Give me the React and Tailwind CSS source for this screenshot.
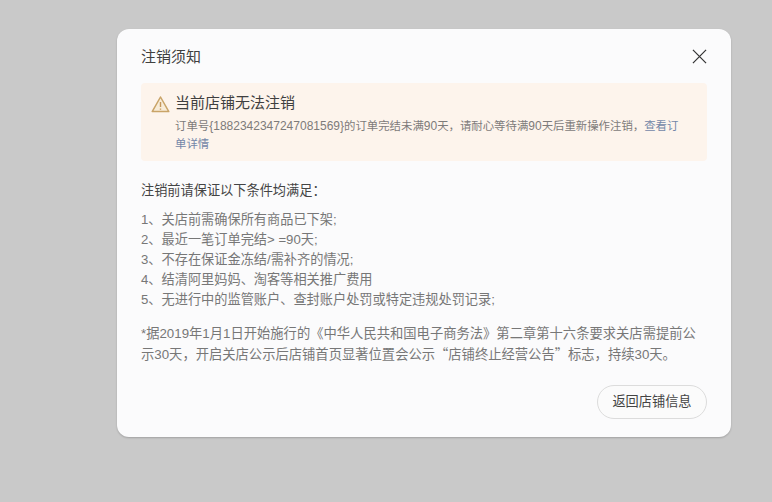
const rules = [
  "1、关店前需确保所有商品已下架;",
  "2、最近一笔订单完结> =90天;",
  "3、不存在保证金冻结/需补齐的情况;",
  "4、结清阿里妈妈、淘客等相关推广费用",
  "5、无进行中的监管账户、查封账户处罚或特定违规处罚记录;",
]

export default function App() {
  return (
    <div lang="zh-CN" className="w-[772px] h-[502px] overflow-hidden bg-[#c9c9c9] pl-[117px] pt-[29px] font-['Liberation_Sans','Noto_Sans_CJK_SC',sans-serif]">
      <div className="w-[614px] h-[408px] rounded-[12px] bg-[#fbfbfc] shadow-[0_1px_2px_rgba(0,0,0,0.2)] pl-[24px] pr-[24px] flex flex-col">
        {/* Header */}
        <div className="h-[54px] shrink-0 flex items-center justify-between">
          <h1 className="text-[15px] leading-[24px] mt-[2px] font-normal text-[#404040]">注销须知</h1>
          <svg width="15" height="15" viewBox="0 0 16 16" className="mt-[1px] text-[#333]" fill="none" stroke="currentColor" strokeWidth="1.3">
            <path d="M1 1 15 15M15 1 1 15" />
          </svg>
        </div>

        {/* Alert */}
        <div className="h-[78px] shrink-0 rounded-[4px] bg-[#fdf4ec] pl-[10px] pr-[28px] pt-[9px] flex gap-[5px]">
          <svg width="19" height="19" viewBox="0 0 19 19" className="shrink-0 mt-[3px]" fill="none">
            <path d="M9.5 2 17.8 16.6H1.2Z" stroke="#c9a468" strokeWidth="1.5" strokeLinejoin="round" fill="#f8ecd8" />
            <path d="M9.5 7v5M9.5 13.4v1.4" stroke="#c4975a" strokeWidth="1.4" />
          </svg>
          <div className="min-w-0">
            <div className="text-[15px] leading-[21px] text-[#3f3f3f]">当前店铺无法注销</div>
            <p className="mt-[4px] text-[11.4px] leading-[18px] text-[#7d7b7a]">
              订单号<span className="text-[12px]">{"{"}1882342347247081569{"}"}</span>的订单完结未满<span className="text-[12px]">90</span>天，请耐心等待满<span className="text-[12px]">90</span>天后重新操作注销，<span className="text-[#7487a8]">查看订单详情</span>
            </p>
          </div>
        </div>

        {/* Conditions */}
        <p className="mt-[20px] text-[13.2px] leading-[20px] text-[#444]">注销前请保证以下条件均满足：</p>
        <ul className="mt-[9px] text-[13.2px] leading-[20px] text-[#777]">
          {rules.map((rule) => (
            <li key={rule}>{rule}</li>
          ))}
        </ul>
        <p className="mt-[14px] text-[13.3px] leading-[20px] text-[#777]">
          *据2019年1月1日开始施行的《中华人民共和国电子商务法》第二章第十六条要求关店需提前公示30天，开启关店公示后店铺首页显著位置会公示<span className="font-['Noto_Sans_CJK_SC']">“</span>店铺终止经营公告<span className="font-['Noto_Sans_CJK_SC']">”</span>标志，持续30天。
        </p>

        {/* Footer */}
        <div className="mt-[20px] flex justify-end">
          <button className="w-[110px] h-[34px] rounded-full border border-[#dcdcdc] bg-[#fbfbfb] text-[13.2px] text-[#444]">
            返回店铺信息
          </button>
        </div>
      </div>
    </div>
  )
}
